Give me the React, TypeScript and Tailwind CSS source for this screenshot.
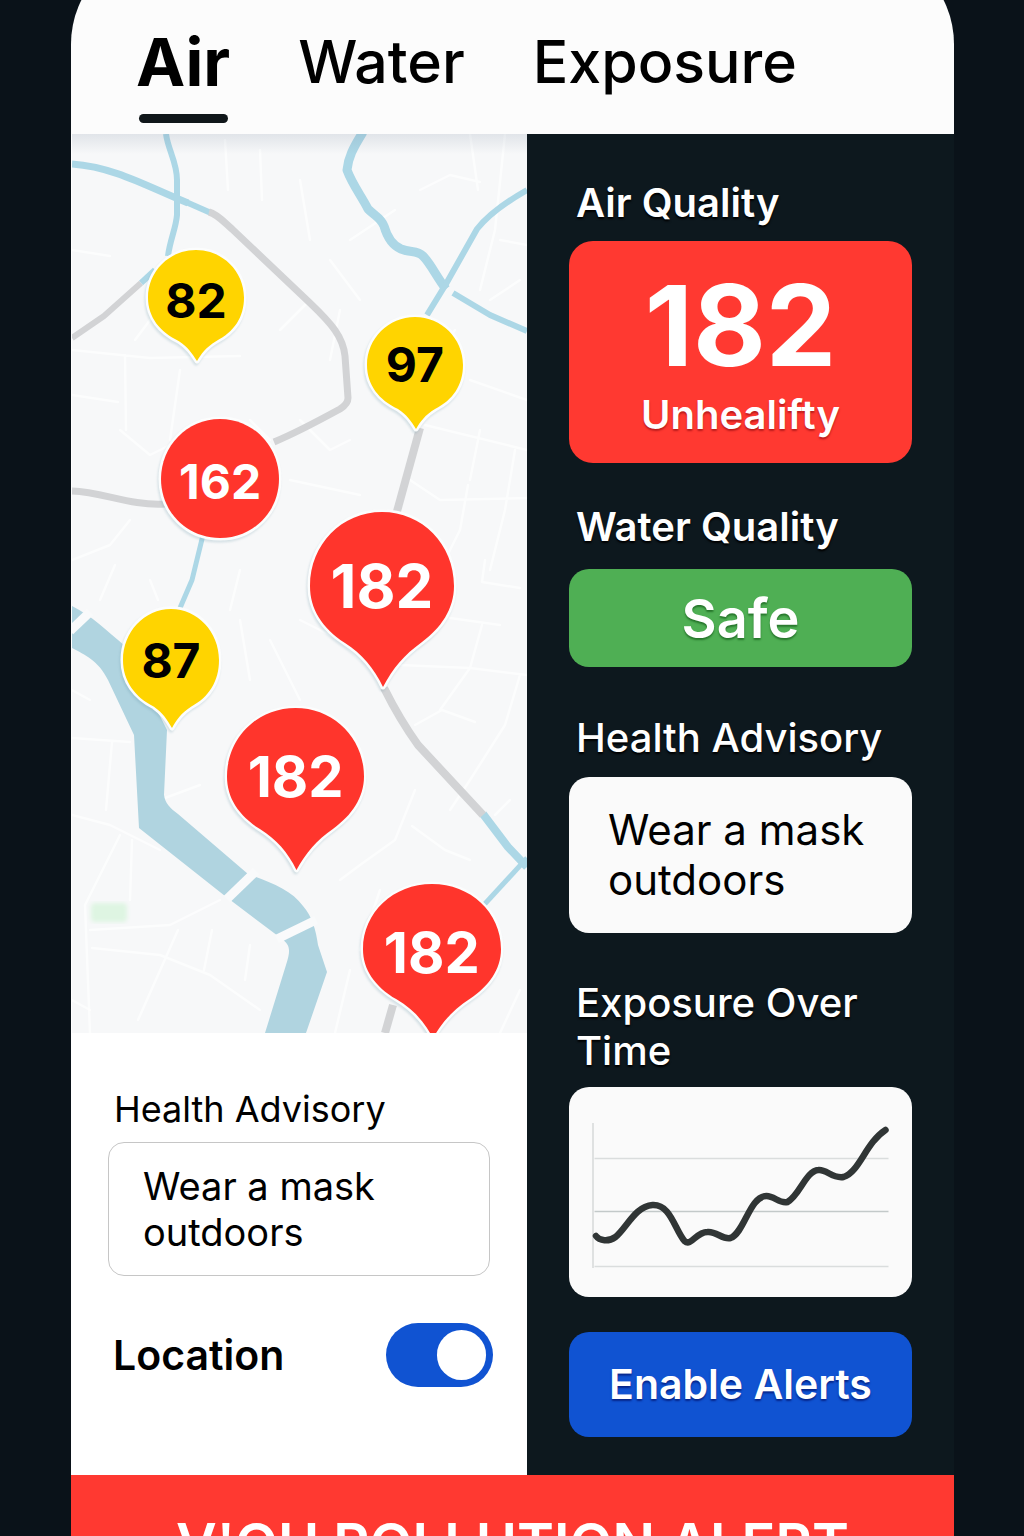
import { useState } from "react";

const SMALL_PIN =
  "M48 0C74.5 0 96 21.5 96 48C96 68 86 83 68 92C58 98 53 105 49 112C44 104 40 98 31 92C12 83 0 68 0 48C0 21.5 21.5 0 48 0Z";
const LARGE_PIN =
  "M72 0C112 0 144 32 144 74C144 97 131 116 112 130C94 143 83 156 73 175C64 156 52 142 35 131C12 116 0 97 0 74C0 32 32 0 72 0Z";
const ROUND_PIN =
  "M59 0C92 0 118 27 118 60C118 93 92 119 59 119C26 119 0 93 0 60C0 27 26 0 59 0Z";

type Pin = {
  value: number;
  path: string;
  box: string;
  place: string;
  label: string;
};

const PINS: Pin[] = [
  { value: 82, path: SMALL_PIN, box: "0 0 96 113", place: "left-[16.7%] top-[116px] w-24 h-[112px] text-[#ffd400]", label: "top-[27px] h-12 text-5xl text-black" },
  { value: 97, path: SMALL_PIN, box: "0 0 96 113", place: "left-[64.8%] top-[183px] w-24 h-[113px] text-[#ffd400]", label: "top-6 h-12 text-5xl text-black" },
  { value: 162, path: ROUND_PIN, box: "0 0 118 119", place: "left-[19.6%] top-[285px] w-[118px] h-[119px] text-[#ff352c]", label: "top-[39px] h-12 text-5xl text-white" },
  { value: 182, path: LARGE_PIN, box: "0 0 144 176", place: "left-[52.3%] top-[378px] w-36 h-44 text-[#ff352c]", label: "top-11 h-[60px] text-6xl text-white" },
  { value: 87, path: SMALL_PIN, box: "0 0 96 113", place: "left-[11.2%] top-[475px] w-24 h-[120px] text-[#ffd400]", label: "top-7 h-12 text-5xl text-black" },
  { value: 182, path: LARGE_PIN, box: "0 0 144 176", place: "left-[34.1%] top-[574px] w-[137px] h-[163px] text-[#ff352c]", label: "top-[39px] h-[60px] text-[56px] text-white" },
  { value: 182, path: LARGE_PIN, box: "0 0 144 176", place: "left-[63.9%] top-[750px] w-[138px] h-[155px] text-[#ff352c]", label: "top-[39px] h-[60px] text-[56px] text-white" },
];

const STREETS = [
  "M72 250L110 256M72 350L150 358L240 356M72 395L118 402M125 355L126 430M180 370L170 440M135 340L150 320M72 560L110 545L130 520M120 430L150 455L180 440",
  "M505 134L495 230L480 290M470 134L478 190M420 190L450 175L480 182M330 260L360 300M395 210L350 240M300 180L310 240M225 140L228 190M260 150L262 200",
  "M470 380L527 400M425 425L527 450M480 430L470 480M515 450L505 510L490 570M410 480L440 500L527 498M468 485L460 530L445 560M290 480L360 495",
  "M485 560L482 582L520 588M450 618L500 625M482 625L470 668L440 710M400 665L470 668L527 675M415 725L442 710L475 722M520 675L505 725L470 780L450 810",
  "M415 790L395 840L360 865L340 880M412 826L445 850L470 860M510 800L495 815M115 565L100 600M150 580L158 600M240 570L230 610",
  "M72 738L130 742M112 742L106 810M120 835L85 905L90 1033M132 840L130 900M90 930L170 925L220 900M92 948L160 955L210 975L260 1010M178 930L138 1020M212 930L204 970M250 945L245 980M72 815L110 825L160 850M165 798L200 785",
  "M350 970L335 1033M520 990L500 1033M300 620L340 640L360 660M240 620L250 680M270 640L300 700M72 690L90 700M380 890L360 950",
  "M280 330L310 300M340 310L330 360M300 420L330 450L350 440M72 1000L90 1010M490 300L520 280M500 240L527 245M455 330L440 350M250 420L270 440",
];

function CityMap() {
  return (
    <svg
      className="absolute inset-0 h-full w-full"
      viewBox="72 134 455 899"
      preserveAspectRatio="xMidYMid slice"
      fill="none"
      aria-hidden="true"
    >
      <defs>
        <filter id="parkBlur">
          <feGaussianBlur stdDeviation="2" />
        </filter>
      </defs>
      <rect x="72" y="134" width="455" height="899" fill="#f7f8f9" />
      {STREETS.map((d) => (
        <path key={d} d={d} stroke="#ffffff" strokeWidth="2.5" strokeLinecap="round" strokeLinejoin="round" opacity="0.65" />
      ))}
      <rect x="91" y="903" width="36" height="19" rx="4" fill="#def5e2" filter="url(#parkBlur)" />

      <path
        d="M72 606C92 616 106 630 125 646L167 730L164 795C165 803 170 808 178 814L248 874C270 882 292 890 303 906C312 916 316 930 318 945L327 972L306 1033H265L286 965C291 950 290 945 282 939L225 896L139 828L134 735L108 680C98 660 85 655 72 648Z"
        fill="#b0d4e0"
      />
      <g stroke="#f9fafb" strokeWidth="9">
        <path d="M70 631L90 612" />
        <path d="M227 899L256 871" />
        <path d="M277 939L316 920" />
      </g>

      <g stroke="#acd7e6" strokeLinejoin="round">
        <path d="M72 164C115 167 150 188 188 203" strokeWidth="7" />
        <path d="M186 202L211 213" strokeWidth="6" />
        <path d="M166 134C168 150 177 162 177 180V215C176 228 170 240 168 256" strokeWidth="6" />
        <path d="M155 270L141 283" strokeWidth="6" />
        <path d="M363 132C353 148 348 158 347 170C352 184 362 197 368 209C375 216 381 218 384 226C388 240 394 246 401 249C411 253 417 250 423 256C431 264 436 276 446 289" strokeWidth="9" />
        <path d="M527 190C506 202 489 214 477 229L446 284L427 315" strokeWidth="6" />
        <path d="M453 293L490 315L527 331" strokeWidth="6" />
        <path d="M203 535L192 580L180 608" strokeWidth="5" />
        <path d="M483 814L508 847L527 867" strokeWidth="8" />
        <path d="M527 858L482 907" strokeWidth="5" />
      </g>
      <g stroke="#d2d3d5" strokeLinejoin="round">
        <path d="M209 212C217 214 224 222 232 229L310 303C332 324 343 337 345 356L348 398Q348 404 340 409C318 421 298 432 274 442" strokeWidth="7" />
        <path d="M141 283L104 316L72 338" strokeWidth="6" />
        <path d="M72 491C103 492 130 506 165 504" strokeWidth="7" />
        <path d="M420 428L396 515" strokeWidth="8" />
        <path d="M384 688C394 708 405 727 418 745L483 815" strokeWidth="8" />
        <path d="M393 1005L385 1033" strokeWidth="8" />
      </g>
    </svg>
  );
}

function MapPin({ pin }: { pin: Pin }) {
  return (
    <button
      type="button"
      aria-label={`Air quality index ${pin.value}`}
      className={`absolute ${pin.place}`}
    >
      <svg
        className="absolute inset-0 h-full w-full overflow-visible drop-shadow-[-1px_2px_1px_rgba(90,140,160,0.22)]"
        viewBox={pin.box}
        preserveAspectRatio="none"
        aria-hidden="true"
      >
        <path d={pin.path} fill="currentColor" stroke="#fcfdfd" strokeWidth="5" paintOrder="stroke" strokeLinejoin="round" />
      </svg>
      <span className={`absolute inset-x-0 flex items-center justify-center leading-none font-bold ${pin.label}`}>
        {pin.value}
      </span>
    </button>
  );
}

function ExposureChart() {
  return (
    <svg viewBox="0 0 342 210" className="h-[210px] w-full" role="img" aria-label="Exposure rising over time" fill="none">
      <path d="M23.5 36V181" stroke="#dfe1e1" strokeWidth="2" />
      <path d="M25 71.500H319M25 179.500H319" stroke="#dadddd" strokeWidth="1.500" />
      <path d="M25 124.500H319" stroke="#c3c9c9" strokeWidth="1.500" />
      <path
        d="M26.500 149C30 154 39 155 46 150C57 141 66 119 83 118C101 117 105 142 115 154C122 160 126 145 138 145C147 144 153 153 161 151C175 146 180 109 197 109C205 109 210 117 218 115C230 109 236 84 249 83C257 82 263 92 274 90C290 85 296 56 316 43"
        stroke="#303535"
        strokeWidth="6.500"
        strokeLinecap="round"
        strokeLinejoin="round"
      />
    </svg>
  );
}

const HEADING = "pl-[7px] text-[40px] leading-[48px] text-white [text-shadow:0_2px_2px_#000]";

export default function App() {
  const [tab, setTab] = useState("Air");
  const [location, setLocation] = useState(true);

  return (
    <div className="h-screen overflow-hidden bg-[#0a1219] pl-[71px] pr-[70px] font-['Inter','Liberation_Sans',sans-serif] text-black">
      <header className="-mt-[54px] rounded-t-[98px] bg-[#fcfcfc] pt-[54px]">
        <nav className="flex h-[134px] items-start gap-[68px] pl-[65px] pt-6" aria-label="Sections">
          {["Air", "Water", "Exposure"].map((name) => (
            <button
              key={name}
              type="button"
              aria-current={tab === name ? "page" : undefined}
              onClick={() => setTab(name)}
              className={`flex flex-col items-center gap-[14px] leading-[76px] ${
                tab === name ? "text-[66px] font-bold" : "text-[59px] font-medium"
              }`}
            >
              {name}
              {tab === name && <span className="h-[9px] w-[89px] rounded-full bg-[#10171a]" />}
            </button>
          ))}
        </nav>
      </header>

      <main className="grid grid-cols-[456fr_427fr]">
        <section className="flex flex-col bg-white">
          <div className="relative ml-px h-[899px] overflow-hidden">
            <CityMap />
            <div className="absolute inset-x-0 top-0 h-5 bg-linear-to-b from-slate-500/15 to-transparent" />
            {PINS.map((pin) => (
              <MapPin key={pin.place} pin={pin} />
            ))}
          </div>
          <div className="flex grow flex-col px-[37px] pt-[52px]">
            <h2 className="pl-[6px] text-4xl leading-[48px]">Health Advisory</h2>
            <p className="mt-[9px] rounded-2xl border border-[#c6c6c6] py-5 pl-[34px] pr-20 text-[38px] leading-[46px]">
              Wear a mask outdoors
            </p>
            <div className="mt-[47px] flex items-center justify-between pl-[5px]">
              <label htmlFor="location" className="text-[41px] font-semibold leading-[48px]">
                Location
              </label>
              <input
                id="location"
                type="checkbox"
                role="switch"
                checked={location}
                onChange={(e) => setLocation(e.target.checked)}
                className="-mr-[3px] flex h-16 w-[107px] appearance-none items-center rounded-full bg-slate-400 px-[7px] before:h-[50px] before:w-[49px] before:rounded-full before:bg-white before:content-[''] checked:justify-end checked:bg-[#1053d2]"
              />
            </div>
          </div>
        </section>

        <section className="flex h-[1341px] flex-col bg-[#0d181e] px-[42px] pt-[45px]">
          <h2 className={`${HEADING} font-semibold`}>Air Quality</h2>
          <div className="mt-[14px] flex h-[222px] flex-col items-center rounded-3xl bg-[#ff3931] pt-8 font-semibold text-white">
            <span className="text-[112px] font-bold leading-[104px]">182</span>
            <span className="mt-3 text-[40px] leading-[52px] [text-shadow:0_2px_2px_#b91c1c]">Unhealifty</span>
          </div>
          <h2 className={`${HEADING} mt-10 font-semibold`}>Water Quality</h2>
          <div className="mt-[18px] flex h-[98px] items-center justify-center rounded-[20px] bg-[#4faf54] text-[54px] font-semibold text-white [text-shadow:0_2px_2px_#26752b]">
            Safe
          </div>
          <h2 className={`${HEADING} mt-[47px] font-medium`}>Health Advisory</h2>
          <p className="mt-[15px] rounded-[20px] bg-[#fafafa] py-7 pl-[39px] pr-10 text-[42px] leading-[50px]">
            Wear a mask outdoors
          </p>
          <h2 className={`${HEADING} mt-[46px] font-medium`}>Exposure Over Time</h2>
          <div className="mt-3 rounded-[20px] bg-[#fafafa]">
            <ExposureChart />
          </div>
          <button
            type="button"
            className="mt-[35px] h-[105px] rounded-[20px] bg-[#1053d2] text-[41px] font-semibold text-white [text-shadow:0_2px_2px_#06258a]"
          >
            Enable Alerts
          </button>
        </section>
      </main>

      <footer className="bg-[#ff3931] pt-9 text-center text-[56px] font-semibold leading-[66px] text-white" role="alert">
        V'OU POLLUTION ALERT
      </footer>
    </div>
  );
}
